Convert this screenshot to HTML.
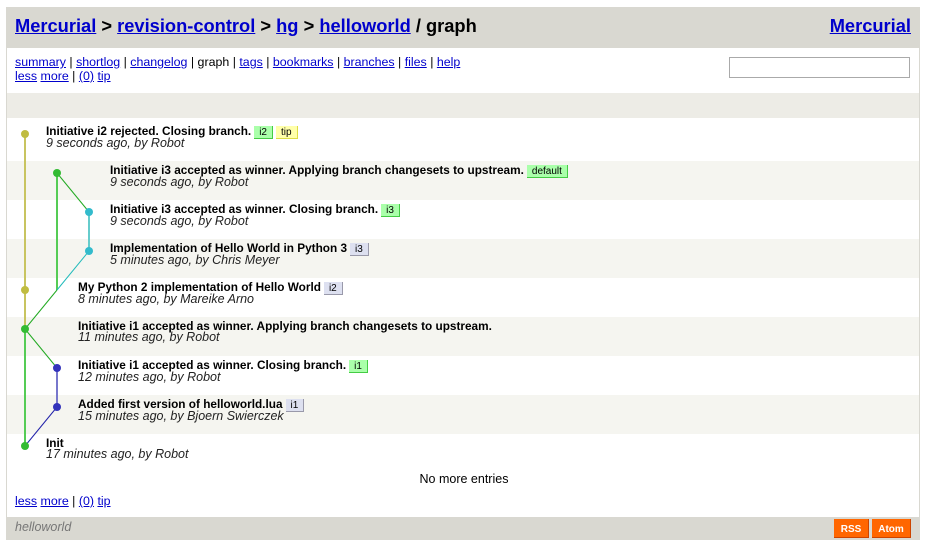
<!DOCTYPE html>
<html><head><meta charset="utf-8"><style>
*{margin:0;padding:0;box-sizing:border-box}
body{width:928px;height:553px;background:#fff;font-family:"Liberation Sans",sans-serif;position:relative;overflow:hidden;color:#000}
a{color:#00c}
.page{position:absolute;left:6px;top:7px;width:914px;height:533px;border-left:1px solid #d9d8d1;border-right:1px solid #d9d8d1}
.hdr{position:absolute;left:0;top:0;width:912px;height:41px;background:#d9d8d1;font-weight:bold;font-size:18.3px}
.hdr .l{position:absolute;left:8px;top:8px}
.hdr .r{position:absolute;right:8px;top:8px}
.nav{position:absolute;left:8px;top:48px;font-size:12.4px;line-height:14px}
.search{position:absolute;left:722px;top:50px;width:181px;height:21px;border:1px solid #aaa;background:#fff}
.bar{position:absolute;left:0;top:86px;width:912px;height:25px;background:#edece6}
.row{position:absolute;left:0;width:912px;height:39px}
.g{background:#f5f5f0}
.ent{position:absolute;font-size:11.8px;line-height:12px;white-space:nowrap}
.ent b{display:inline-block}
.ent i{display:block;font-size:12.5px;line-height:11px;margin-top:0;color:#222}
.bd{display:inline-block;font-size:10px;font-weight:normal;line-height:12px;height:13px;padding:1px 5px 0;margin-left:3px;vertical-align:top;position:relative;top:1px}
.bg{background:#aaffaa;border-right:1px solid #44cc44;border-bottom:1px solid #44cc44}
.by{background:#ffffaa;border-right:1px solid #dddd44;border-bottom:1px solid #dddd44}
.bb{background:#dde0f0;border-right:1px solid #99a;border-bottom:1px solid #99a}
svg{position:absolute;left:0;top:0}
.foot{position:absolute;left:0;top:510px;width:912px;height:23px;background:#d9d8d1}
.foot i{position:absolute;left:8px;top:3px;font-size:12.5px;color:#777}
.btn{position:absolute;top:2px;height:19px;background:#f60;color:#fff;font-size:10px;font-weight:bold;line-height:21px;text-align:center;border-right:1px solid #c40;border-bottom:1px solid #c40}
</style></head><body>
<div class="page">
<div class="hdr"><span class="l"><a href="#">Mercurial</a> &gt; <a href="#">revision-control</a> &gt; <a href="#">hg</a> &gt; <a href="#">helloworld</a> / graph</span><span class="r"><a href="#">Mercurial</a></span></div>
<div class="nav"><a href="#">summary</a> | <a href="#">shortlog</a> | <a href="#">changelog</a> | graph | <a href="#">tags</a> | <a href="#">bookmarks</a> | <a href="#">branches</a> | <a href="#">files</a> | <a href="#">help</a><br><a href="#">less</a> <a href="#">more</a> | <a href="#">(0)</a> <a href="#">tip</a></div>
<div class="search"></div>
<div class="bar"></div>
<div class="row g" style="top:154px"></div>
<div class="row g" style="top:232px"></div>
<div class="row g" style="top:310px"></div>
<div class="row g" style="top:388px"></div>
</div>
<svg width="928" height="553">
<g fill="none">
<line x1="25" y1="134" x2="25" y2="329" stroke="#c8c460" stroke-width="2"/>
<line x1="57" y1="173" x2="57" y2="290" stroke="#55cc55" stroke-width="2"/>
<line x1="57" y1="173" x2="89" y2="212" stroke="#2a2" stroke-width="1"/>
<line x1="89" y1="212" x2="89" y2="251" stroke="#66cccc" stroke-width="2"/>
<line x1="89" y1="251" x2="57" y2="290" stroke="#2bb" stroke-width="1"/>
<line x1="57" y1="290" x2="25" y2="329" stroke="#2a2" stroke-width="1"/>
<line x1="25" y1="329" x2="25" y2="446" stroke="#55cc55" stroke-width="2"/>
<line x1="25" y1="329" x2="57" y2="368" stroke="#2a2" stroke-width="1"/>
<line x1="57" y1="368" x2="57" y2="407" stroke="#7777cc" stroke-width="2"/>
<line x1="57" y1="407" x2="25" y2="446" stroke="#22a" stroke-width="1"/>
</g>
<g>
<circle cx="25" cy="134" r="4" fill="#c0bc40"/>
<circle cx="57" cy="173" r="4" fill="#3b3"/>
<circle cx="89" cy="212" r="4" fill="#3bc"/>
<circle cx="89" cy="251" r="4" fill="#3bc"/>
<circle cx="25" cy="290" r="4" fill="#c0bc40"/>
<circle cx="25" cy="329" r="4" fill="#3b3"/>
<circle cx="57" cy="368" r="4" fill="#33b"/>
<circle cx="57" cy="407" r="4" fill="#33b"/>
<circle cx="25" cy="446" r="4" fill="#3b3"/>
</g>
</svg>
<div class="ent" style="left:46px;top:125px"><b>Initiative i2 rejected. Closing branch.</b><span class="bd bg">i2</span><span class="bd by">tip</span><i>9 seconds ago, by Robot</i></div>
<div class="ent" style="left:110px;top:164px"><b>Initiative i3 accepted as winner. Applying branch changesets to upstream.</b><span class="bd bg">default</span><i>9 seconds ago, by Robot</i></div>
<div class="ent" style="left:110px;top:203px"><b>Initiative i3 accepted as winner. Closing branch.</b><span class="bd bg">i3</span><i>9 seconds ago, by Robot</i></div>
<div class="ent" style="left:110px;top:242px"><b>Implementation of Hello World in Python 3</b><span class="bd bb">i3</span><i>5 minutes ago, by Chris Meyer</i></div>
<div class="ent" style="left:78px;top:281px"><b>My Python 2 implementation of Hello World</b><span class="bd bb">i2</span><i>8 minutes ago, by Mareike Arno</i></div>
<div class="ent" style="left:78px;top:320px"><b>Initiative i1 accepted as winner. Applying branch changesets to upstream.</b><i>11 minutes ago, by Robot</i></div>
<div class="ent" style="left:78px;top:359px"><b>Initiative i1 accepted as winner. Closing branch.</b><span class="bd bg">i1</span><i>12 minutes ago, by Robot</i></div>
<div class="ent" style="left:78px;top:398px"><b>Added first version of helloworld.lua</b><span class="bd bb">i1</span><i>15 minutes ago, by Bjoern Swierczek</i></div>
<div class="ent" style="left:46px;top:437px"><b>Init</b><i>17 minutes ago, by Robot</i></div>
<div style="position:absolute;left:0;width:928px;top:472px;text-align:center;font-size:12.5px">No more entries</div>
<div style="position:absolute;left:15px;top:494px;font-size:12.4px"><a href="#">less</a> <a href="#">more</a> | <a href="#">(0)</a> <a href="#">tip</a></div>
<div class="foot" style="left:7px;top:517px;width:912px;position:absolute"><i>helloworld</i><div class="btn" style="left:827px;width:35px">RSS</div><div class="btn" style="left:865px;width:39px">Atom</div></div>
</body></html>
